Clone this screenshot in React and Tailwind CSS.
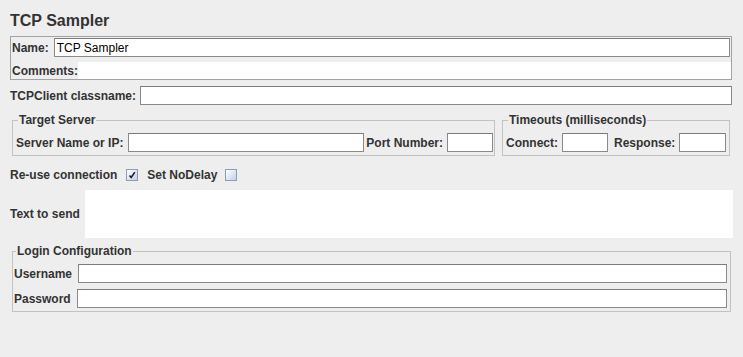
import React from 'react';

// ── Small widgets ─────────────────────────────────────────────────────────────

const Field = ({ className = '', value }) => (
    <div className={`h-[19px] bg-white border border-[#8a8a8a] border-t-[#7c7c7c] flex items-center pl-[2px] text-[12px] font-normal text-black leading-none ${className}`}>
        {value}
    </div>
);

const Check = ({ checked }) => (
    <div className="w-[12px] h-[12px] border border-[#8f9db3] bg-gradient-to-br from-[#ffffff] to-[#c4d0e6] flex items-center justify-center">
        {checked && (
            <svg width="8" height="8" viewBox="0 0 8 8">
                <path d="M1.5 4.5 L3.2 6.5 L6.8 1.2" fill="none" stroke="#1a1a1a" strokeWidth="1.5" />
            </svg>
        )}
    </div>
);

const Group = ({ title, className = '', children }) => (
    <fieldset className={`border border-[#c2c2c2] ${className}`}>
        <legend className="ml-[2px] px-[1px] text-[12px] leading-[14px] font-bold text-[#333]">{title}</legend>
        {children}
    </fieldset>
);

// ── Page ──────────────────────────────────────────────────────────────────────

export default function App() {
    return (
        <div className="w-[743px] h-[357px] bg-[#eeeeee] text-[#333] font-['Liberation_Sans',Arial,sans-serif] flex flex-col overflow-hidden">
            {/* Title */}
            <div className="h-[36px] pl-[10px] pt-[12px] text-[16px] leading-[18px] font-bold">TCP Sampler</div>

            {/* Name / comments */}
            <div className="ml-[10px] w-[722px] h-[44px] border border-[#a3a3a3] flex flex-col">
                <div className="h-[21px] flex items-center pl-[1px] pr-[1px] gap-[5px]">
                    <span className="text-[12px] font-bold">Name:</span>
                    <Field className="flex-1" value="TCP Sampler" />
                </div>
                <div className="mt-[4px] h-[17px] flex items-center pl-[1px]">
                    <span className="text-[12px] font-bold">Comments:</span>
                    <div className="flex-1 h-full bg-white" />
                </div>
            </div>

            {/* Classname */}
            <div className="mt-[6px] pl-[10px] pr-[11px] flex items-center gap-[4px] text-[12px] font-bold">
                <span>TCPClient classname:</span>
                <Field className="flex-1" />
            </div>

            {/* Target server + timeouts */}
            <div className="mt-[8px] pl-[12px] flex">
                <Group title="Target Server" className="w-[483px] pl-[3px] pr-[1px] pt-[6px] pb-[3px]">
                    <div className="flex items-center text-[12px] font-bold">
                        <span>Server Name or IP:</span>
                        <Field className="flex-1 ml-[5px]" />
                        <span className="ml-[2px]">Port Number:</span>
                        <Field className="w-[46px] ml-[4px]" />
                    </div>
                </Group>
                <Group title="Timeouts (milliseconds)" className="ml-[7px] w-[228px] pl-[3px] pr-[3px] pt-[6px] pb-[3px]">
                    <div className="flex items-center text-[12px] font-bold">
                        <span>Connect:</span>
                        <Field className="w-[46px] ml-[4px]" />
                        <span className="ml-[6px]">Response:</span>
                        <Field className="w-[47px] ml-auto" />
                    </div>
                </Group>
            </div>

            {/* Options */}
            <div className="mt-[12px] h-[14px] pl-[10px] flex items-center text-[12px] font-bold">
                <span>Re-use connection</span>
                <div className="ml-[9px]"><Check checked /></div>
                <span className="ml-[9px]">Set NoDelay</span>
                <div className="ml-[8px]"><Check /></div>
            </div>

            {/* Text to send */}
            <div className="mt-[8px] h-[48px] pl-[10px] pr-[10px] flex items-center text-[12px] font-bold">
                <span className="w-[75px]">Text to send</span>
                <div className="flex-1 h-full bg-white" />
            </div>

            {/* Login configuration */}
            <div className="mt-[6px] pl-[12px]">
                <Group title="Login Configuration" className="w-[719px] pl-[1px] pr-[3px] pt-[6px] pb-[3px]">
                    <div className="flex flex-col gap-[6px] text-[12px] font-bold">
                        <div className="flex items-center">
                            <span>Username</span>
                            <Field className="flex-1 ml-[6px]" />
                        </div>
                        <div className="flex items-center">
                            <span>Password</span>
                            <Field className="flex-1 ml-[6px]" />
                        </div>
                    </div>
                </Group>
            </div>
        </div>
    );
}
